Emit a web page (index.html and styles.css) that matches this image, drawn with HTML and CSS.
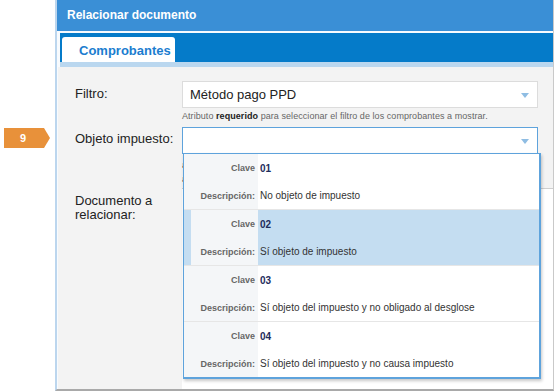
FILE: index.html
```html
<!DOCTYPE html>
<html lang="es">
<head>
<meta charset="utf-8">
<link rel="stylesheet" href="styles.css">
</head>
<body>
<div class="stage">
  <div class="gutter">
    <div class="badge">9</div>
  </div>
  <div class="panel">
    <div class="header">Relacionar documento</div>
    <div class="inner">
      <div class="tabbar"><div class="tab">Comprobantes</div></div>
      <div class="tabstrip"></div>
      <div class="body">
        <div class="label row1">Filtro:</div>
        <div class="field">
          <div class="select">Método pago PPD<span class="caret"></span></div>
          <div class="hint">Atributo <b>requerido</b> para seleccionar el filtro de los comprobantes a mostrar.</div>
        </div>
        <div class="label row2">Objeto impuesto:</div>
        <div class="field drop-host">
          <div class="select open"><span class="caret"></span></div>
          <div class="under">
            <div>a</div>
            <div>a</div>
          </div>
          <div class="dropdown">
            <div class="opt">
              <div class="k">Clave</div><div class="v code">01</div>
              <div class="k">Descripción:</div><div class="v">No objeto de impuesto</div>
            </div>
            <div class="opt sel">
              <div class="k">Clave</div><div class="v code">02</div>
              <div class="k">Descripción:</div><div class="v">Sí objeto de impuesto</div>
            </div>
            <div class="opt">
              <div class="k">Clave</div><div class="v code">03</div>
              <div class="k">Descripción:</div><div class="v">Sí objeto del impuesto y no obligado al desglose</div>
            </div>
            <div class="opt last">
              <div class="k">Clave</div><div class="v code">04</div>
              <div class="k">Descripción:</div><div class="v">Sí objeto del impuesto y no causa impuesto</div>
            </div>
          </div>
        </div>
        <div class="label row3">Documento a<br>relacionar:</div>
        <div class="docarea"></div>
      </div>
    </div>
  </div>
</div>
</body>
</html>
```

FILE: styles.css
```css
* { box-sizing: border-box; }
html, body { margin: 0; padding: 0; background: #fff; }
body {
  font-family: "Liberation Sans", Arial, sans-serif;
  width: 555px;
  height: 392px;
  overflow: hidden;
}
.stage {
  display: flex;
  height: 392px;
}
.gutter {
  width: 55px;
  padding-top: 128px;
  padding-left: 4px;
}
.badge {
  position: relative;
  width: 40px;
  height: 20px;
  background: #e8913a;
  color: #fff;
  font-weight: bold;
  font-size: 11px;
  line-height: 20px;
  text-align: center;
  padding-right: 2px;
}
.badge::after {
  content: "";
  position: absolute;
  right: -6px;
  top: 0;
  border-left: 6px solid #e8913a;
  border-top: 10px solid transparent;
  border-bottom: 10px solid transparent;
}
.panel {
  width: 499px;
  height: 391px;
  border-left: 2px solid #bcd6ee;
  border-right: 1px solid #c9c9c9;
  border-bottom: 2px solid #a9a9a9;
  display: flex;
  flex-direction: column;
  background: #f8fbfe;
}
.header {
  height: 31px;
  background: #3a8fd6;
  color: #fff;
  font-weight: bold;
  font-size: 12px;
  line-height: 31px;
  padding-left: 10px;
  flex: none;
}
.inner {
  flex: 1;
  display: flex;
  flex-direction: column;
  padding-top: 2px;
  padding-left: 1px;
}
.tabbar {
  margin-left: 2px;
  height: 29px;
  background: #057bc9;
  padding: 4px 0 0 2px;
  flex: none;
}
.tab {
  width: 113px;
  height: 25px;
  background: #fff;
  border-radius: 3px 3px 0 0;
  color: #1b7dcf;
  font-weight: bold;
  font-size: 13px;
  line-height: 27px;
  padding-left: 17px;
}
.tabstrip {
  margin-left: 2px;
  height: 5px;
  background: #bad7ef;
  flex: none;
}
.body {
  flex: 1;
  background: #f3f3f3;
  display: grid;
  grid-template-columns: 107px 356px;
  grid-template-rows: auto auto 1fr;
  padding: 14px 0 0 17px;
  color: #222;
}
.label {
  font-size: 13px;
  line-height: 15px;
}
.row1 { padding-top: 5px; }
.row2 { padding-top: 4px; margin-top: 6px; }
.row3 { padding-top: 6px; line-height: 14px; }
.field { position: relative; }
.drop-host { margin-top: 6px; }
.select {
  position: relative;
  height: 27px;
  background: #fff;
  border: 1px solid #dcdcdc;
  font-size: 13px;
  line-height: 25px;
  padding-left: 7px;
  color: #222;
}
.select.open { border-color: #5ea3dc; }
.caret {
  position: absolute;
  right: 8px;
  top: 11px;
  border-top: 5px solid #8fbde3;
  border-left: 4.5px solid transparent;
  border-right: 4.5px solid transparent;
}
.hint {
  margin-top: 3px;
  font-size: 9px;
  line-height: 10px;
  color: #666;
  white-space: nowrap;
  letter-spacing: 0.06px;
}
.hint b { color: #222; }
.under {
  height: 34px;
  padding-top: 4px;
  font-size: 9px;
  line-height: 14px;
  color: #555;
}
.docarea {
  background: #fff;
  border-top: 1px solid #cfcfcf;
  margin-right: -15px;
}
.dropdown {
  position: absolute;
  top: 26px;
  left: 1px;
  width: 358px;
  border: 1px solid #5ea3dc;
  border-right-width: 2px;
  border-bottom-width: 2px;
  background: #fff;
  box-shadow: 1px 2px 3px rgba(0,0,0,0.22);
  z-index: 5;
}
.opt {
  display: grid;
  grid-template-columns: 74px 1fr;
  grid-template-rows: 28px 27px;
  background: #f4f6f8;
  border-bottom: 1px solid #e6e6e6;
}
.opt.last { border-bottom: 0; }
.opt.sel { background: #c4ddf1; }
.k {
  margin-left: 7px;
  background: #f4f6f8;
  padding-right: 3px;
  font-size: 9px;
  font-weight: bold;
  color: #666;
  display: flex;
  align-items: center;
  justify-content: flex-end;
}
.v {
  background: #fff;
  font-size: 10px;
  color: #333;
  padding-left: 2px;
  display: flex;
  align-items: center;
  white-space: nowrap;
}
.opt.sel .v { background: transparent; }
.v.code {
  font-weight: bold;
  color: #1e2d5c;
}
```
